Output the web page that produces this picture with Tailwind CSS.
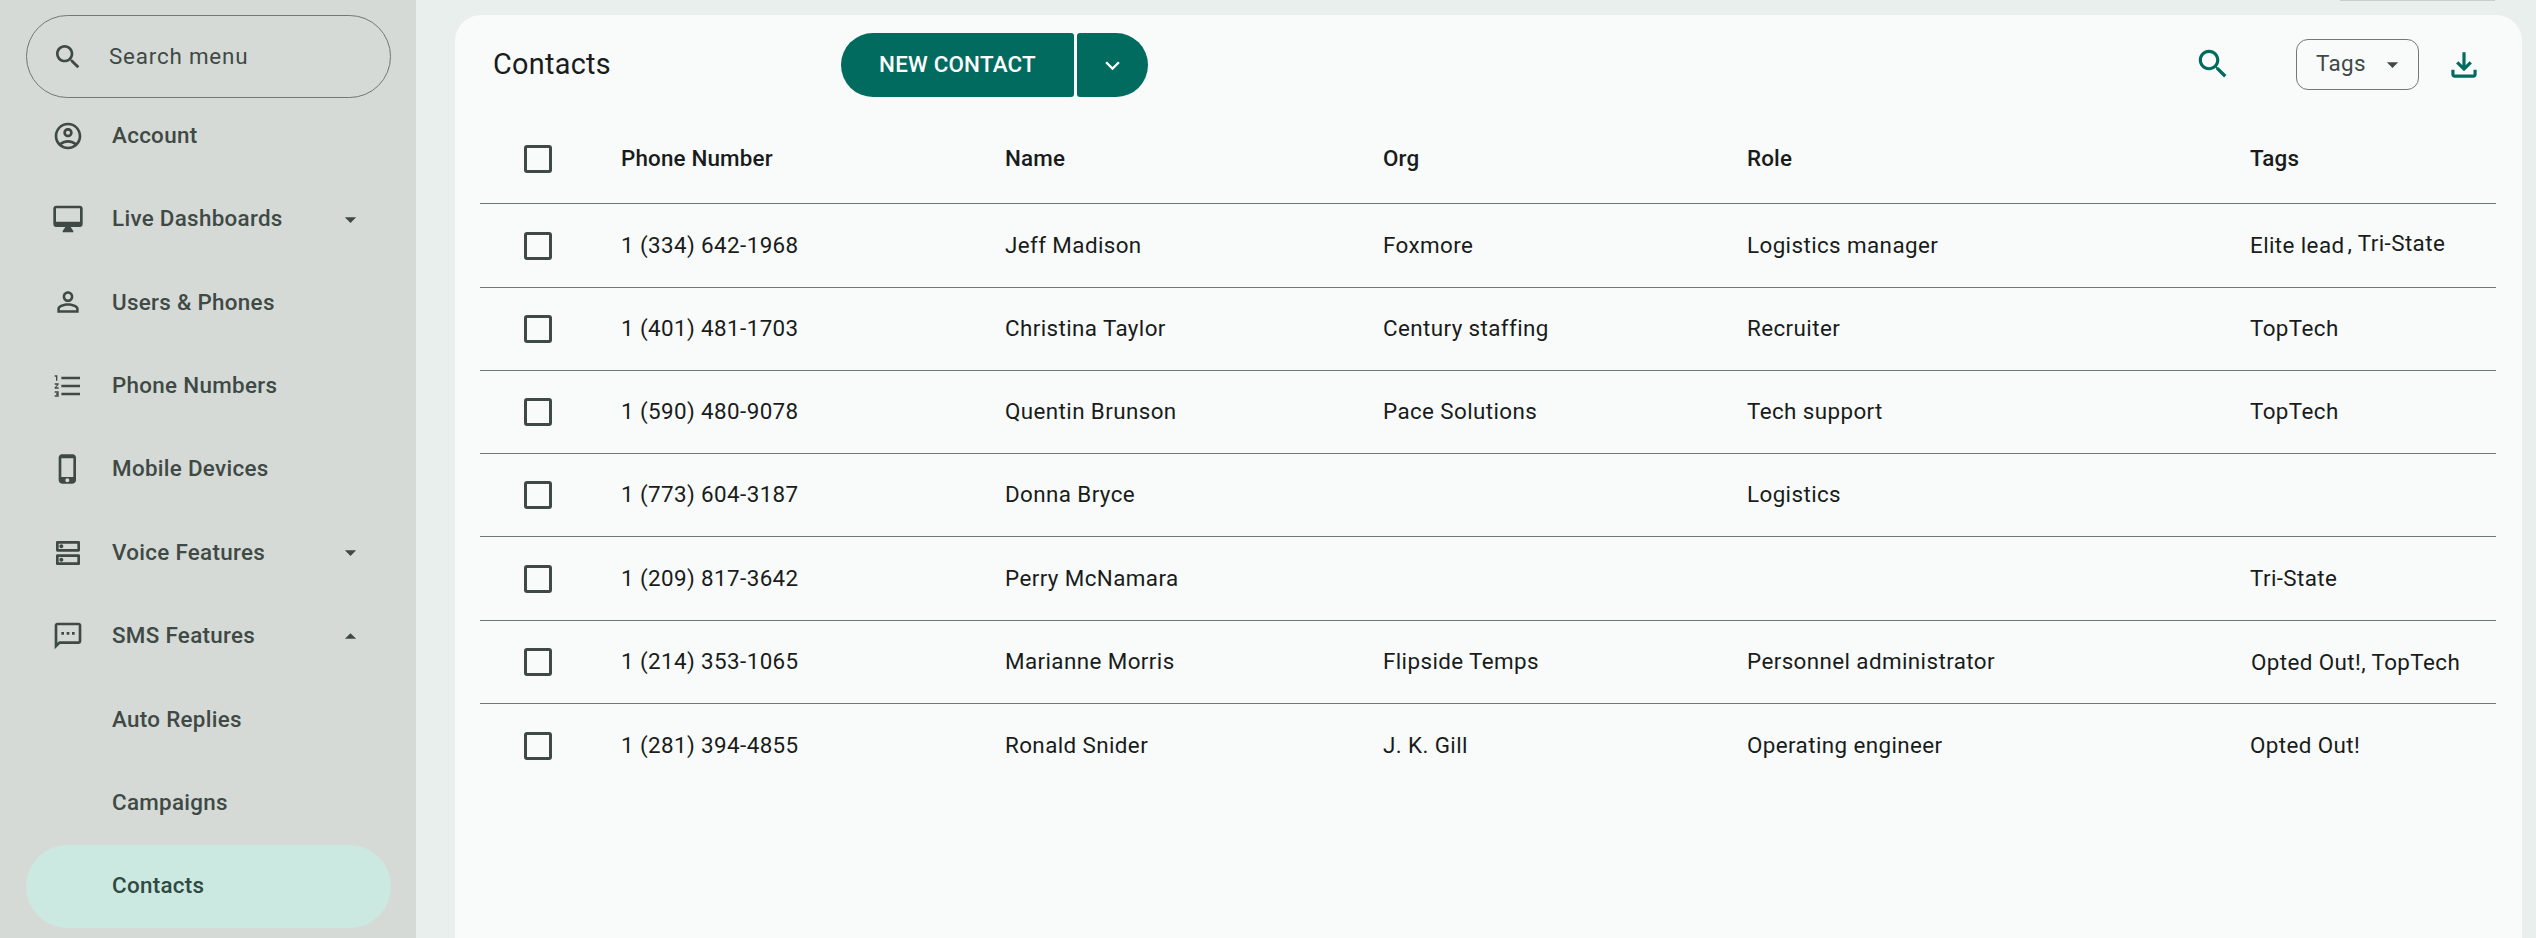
<!DOCTYPE html>
<html lang="en">
<head>
  <meta charset="UTF-8">
  <meta name="viewport" content="width=device-width, initial-scale=1.0">
  <title>Contacts</title>
  <script src="https://cdn.jsdelivr.net/npm/@tailwindcss/browser@4"></script>
</head>
<body class="h-screen overflow-hidden bg-[#e9efec] font-['Roboto',sans-serif] text-[22.4px] text-[#191c1b] flex">
  <!-- sidebar -->
  <aside class="w-[416px] h-[938px] shrink-0 bg-[#d5dad6] text-[#3f4945] pl-[26px] pr-[25px] pt-[15px]">
    <div class="h-[83px] border border-[#6f7975] rounded-[42px] flex items-center pl-[25px]">
      <svg class="w-8 h-8 fill-current" viewBox="0 0 24 24"><path d="M15.5 14h-.79l-.28-.27C15.41 12.59 16 11.11 16 9.5 16 5.91 13.09 3 9.5 3S3 5.91 3 9.5 5.91 16 9.5 16c1.61 0 3.09-.59 4.23-1.57l.27.28v.79l5 4.99L20.49 19l-4.99-5zm-6 0C7.01 14 5 11.99 5 9.5S7.01 5 9.5 5 14 7.01 14 9.5 11.99 14 9.5 14z"/></svg>
      <span class="ml-[25px] tracking-[0.8px]">Search menu</span>
    </div>
    <nav class="font-medium tracking-[0.3px]">
      <a class="h-[83.4px] -mt-[4px] flex items-center pl-[26px]">
        <svg class="w-8 h-8 fill-current mr-[28px]" viewBox="0 0 24 24"><path fill-rule="evenodd" d="M12 2C6.48 2 2 6.48 2 12s4.48 10 10 10 10-4.48 10-10S17.52 2 12 2zM7.35 18.5C8.66 17.56 10.26 17 12 17s3.34.56 4.65 1.5C15.34 19.44 13.74 20 12 20s-3.34-.56-4.65-1.5zm10.79-1.38C16.45 15.8 14.32 15 12 15s-4.45.8-6.14 2.12C4.7 15.73 4 13.95 4 12c0-4.42 3.58-8 8-8s8 3.58 8 8c0 1.95-.7 3.73-1.86 5.12zM12 6c-1.93 0-3.5 1.57-3.5 3.5S10.07 13 12 13s3.5-1.57 3.5-3.5S13.93 6 12 6zm0 5c-.83 0-1.5-.67-1.5-1.5S11.17 8 12 8s1.5.67 1.5 1.5S12.83 11 12 11z"/></svg>
        Account
      </a>
      <a class="h-[83.4px] flex items-center pl-[26px]">
        <svg class="w-8 h-8 fill-current mr-[28px]" viewBox="0 0 24 24"><path d="M21 2H3c-1.1 0-2 .9-2 2v12c0 1.1.9 2 2 2h7l-2 3v1h8v-1l-2-3h7c1.1 0 2-.9 2-2V4c0-1.1-.9-2-2-2zm0 12H3V4h18v10z"/></svg>
        Live Dashboards
        <svg class="w-[27px] h-[27px] fill-current ml-auto mr-[27px]" viewBox="0 0 24 24"><path d="M7 10l5 5 5-5z"/></svg>
      </a>
      <a class="h-[83.4px] flex items-center pl-[26px]">
        <svg class="w-8 h-8 fill-current mr-[28px]" viewBox="0 0 24 24"><path d="M12 5.9c1.16 0 2.1.94 2.1 2.1s-.94 2.1-2.1 2.1S9.9 9.16 9.9 8s.94-2.1 2.1-2.1m0 9c2.97 0 6.1 1.46 6.1 2.1v1.1H5.9V17c0-.64 3.13-2.1 6.1-2.1M12 4C9.79 4 8 5.79 8 8s1.79 4 4 4 4-1.79 4-4-1.79-4-4-4zm0 9c-2.67 0-8 1.34-8 4v3h16v-3c0-2.66-5.33-4-8-4z"/></svg>
        Users &amp; Phones
      </a>
      <a class="h-[83.4px] flex items-center pl-[26px]">
        <svg class="w-8 h-8 fill-current mr-[28px]" viewBox="0 0 24 24"><path d="M2 17h2v.5H3v1h1v.5H2v1h3v-4H2v1zm1-9h1V4H2v1h1v3zm-1 3h1.8L2 13.1v.9h3v-1H3.2L5 10.9V10H2v1zm5-6v2h14V5H7zm0 14h14v-2H7v2zm0-6h14v-2H7v2z"/></svg>
        Phone Numbers
      </a>
      <a class="h-[83.4px] flex items-center pl-[26px]">
        <svg class="w-8 h-8 fill-current mr-[28px]" viewBox="0 0 24 24"><path d="M15.5 1h-8C6.12 1 5 2.12 5 3.5v17C5 21.88 6.12 23 7.5 23h8c1.38 0 2.5-1.12 2.5-2.5v-17C18 2.12 16.88 1 15.5 1zm-4 21c-.83 0-1.5-.67-1.5-1.5s.67-1.5 1.5-1.5 1.5.67 1.5 1.5-.67 1.5-1.5 1.5zm4.5-4H7V4h9v14z"/></svg>
        Mobile Devices
      </a>
      <a class="h-[83.4px] flex items-center pl-[26px]">
        <svg class="w-8 h-8 fill-current mr-[28px]" viewBox="0 0 24 24"><path d="M19 15v4H5v-4h14m1-2H4c-.55 0-1 .45-1 1v6c0 .55.45 1 1 1h16c.55 0 1-.45 1-1v-6c0-.55-.45-1-1-1zM7 18.5c-.82 0-1.5-.67-1.5-1.5s.68-1.5 1.5-1.5 1.5.67 1.5 1.5-.67 1.5-1.5 1.5zM19 5v4H5V5h14m1-2H4c-.55 0-1 .45-1 1v6c0 .55.45 1 1 1h16c.55 0 1-.45 1-1V4c0-.55-.45-1-1-1zM7 8.5c-.82 0-1.5-.67-1.5-1.5S6.18 5.5 7 5.5s1.5.68 1.5 1.5S7.83 8.5 7 8.5z"/></svg>
        Voice Features
        <svg class="w-[27px] h-[27px] fill-current ml-auto mr-[27px]" viewBox="0 0 24 24"><path d="M7 10l5 5 5-5z"/></svg>
      </a>
      <a class="h-[83.4px] flex items-center pl-[26px]">
        <svg class="w-8 h-8 fill-current mr-[28px]" viewBox="0 0 24 24"><path d="M20 2H4c-1.1 0-1.99.9-1.99 2L2 22l4-4h14c1.1 0 2-.9 2-2V4c0-1.1-.9-2-2-2zm0 14H5.17L4 17.17V4h16v12zM7 9h2v2H7zm4 0h2v2h-2zm4 0h2v2h-2z"/></svg>
        SMS Features
        <svg class="w-[27px] h-[27px] fill-current ml-auto mr-[27px]" viewBox="0 0 24 24"><path d="M7 14l5-5 5 5z"/></svg>
      </a>
      <a class="h-[83.4px] flex items-center pl-[86px]">Auto Replies</a>
      <a class="h-[83.4px] flex items-center pl-[86px]">Campaigns</a>
      <a class="h-[83px] flex items-center pl-[86px] bg-[#cce9e1] text-[#2f4a43] rounded-[42px]">Contacts</a>
    </nav>
  </aside>

  <!-- main -->
  <main class="relative flex-1 pl-[39px] pr-[14px] pt-[15px]">
    <div class="absolute top-0 right-[41px] w-[155px] h-px bg-[#c9cfcb]"></div>
    <section class="h-[1000px] bg-[#f8fbfa] rounded-t-[26px] pl-[25px] pr-[26px]">
      <header class="h-[100px] flex items-center">
        <h1 class="ml-[13px] w-[348px] text-[28.8px] tracking-[0.3px] leading-none -mt-px">Contacts</h1>
        <button class="h-16 w-[233px] bg-[#006b5e] text-white font-medium text-[22.4px] tracking-[0.2px] rounded-l-[32px] rounded-r-[3px]">NEW CONTACT</button>
        <button class="h-16 w-[71px] ml-[3px] bg-[#006b5e] text-white rounded-r-[32px] rounded-l-[3px] flex items-center justify-center">
          <svg class="w-[29px] h-[29px] fill-current" viewBox="0 0 24 24"><path d="M7.41 8.59L12 13.17l4.59-4.58L18 10l-6 6-6-6z"/></svg>
        </button>
        <svg class="w-[38px] h-[38px] fill-[#006b5e] ml-auto mb-[2px]" viewBox="0 0 24 24"><path d="M15.5 14h-.79l-.28-.27C15.41 12.59 16 11.11 16 9.5 16 5.91 13.09 3 9.5 3S3 5.91 3 9.5 5.91 16 9.5 16c1.61 0 3.09-.59 4.23-1.57l.27.28v.79l5 4.99L20.49 19l-4.99-5zm-6 0C7.01 14 5 11.99 5 9.5S7.01 5 9.5 5 14 7.01 14 9.5 11.99 14 9.5 14z"/></svg>
        <div class="ml-[64px] w-[123px] h-[51px] mb-[2px] border border-[#6f7975] rounded-[12px] flex items-center pl-[19px] text-[#3f4945] tracking-[0.4px]">
          Tags
          <svg class="w-[27px] h-[27px] fill-current ml-[13px]" viewBox="0 0 24 24"><path d="M7 10l5 5 5-5z"/></svg>
        </div>
        <svg class="w-[38px] h-[38px] fill-[#006b5e] ml-[26px] mr-[13px]" viewBox="0 0 24 24"><path d="M18 15v3H6v-3H4v3c0 1.1.9 2 2 2h12c1.1 0 2-.9 2-2v-3h-2zm-1-4l-1.41-1.41L13 12.17V4h-2v8.17L8.41 9.59 7 11l5 5 5-5z"/></svg>
      </header>

      <div class="tracking-[0.4px]">
        <div class="grid grid-cols-[141px_384px_378px_364px_503px_1fr] items-center h-[89.4px] border-b border-[#6f7975] font-medium tracking-[0.16px]">
          <span class="ml-[44px] w-7 h-7 border-[3px] border-[#3f4945] rounded-[3px]"></span>
          <span>Phone Number</span><span>Name</span><span>Org</span><span>Role</span><span>Tags</span>
        </div>
        <div class="grid grid-cols-[141px_384px_378px_364px_503px_1fr] items-center h-[83.25px] border-b border-[#6f7975]">
          <span class="ml-[44px] w-7 h-7 border-[3px] border-[#3f4945] rounded-[3px]"></span>
          <span>1 (334) 642-1968</span><span>Jeff Madison</span><span>Foxmore</span><span>Logistics manager</span>
          <span class="whitespace-nowrap">Elite lead<span class="relative -top-[2px] ml-[3px]">, Tri-State</span></span>
        </div>
        <div class="grid grid-cols-[141px_384px_378px_364px_503px_1fr] items-center h-[83.25px] border-b border-[#6f7975]">
          <span class="ml-[44px] w-7 h-7 border-[3px] border-[#3f4945] rounded-[3px]"></span>
          <span>1 (401) 481-1703</span><span>Christina Taylor</span><span>Century staffing</span><span>Recruiter</span><span>TopTech</span>
        </div>
        <div class="grid grid-cols-[141px_384px_378px_364px_503px_1fr] items-center h-[83.25px] border-b border-[#6f7975]">
          <span class="ml-[44px] w-7 h-7 border-[3px] border-[#3f4945] rounded-[3px]"></span>
          <span>1 (590) 480-9078</span><span>Quentin Brunson</span><span>Pace Solutions</span><span>Tech support</span><span>TopTech</span>
        </div>
        <div class="grid grid-cols-[141px_384px_378px_364px_503px_1fr] items-center h-[83.25px] border-b border-[#6f7975]">
          <span class="ml-[44px] w-7 h-7 border-[3px] border-[#3f4945] rounded-[3px]"></span>
          <span>1 (773) 604-3187</span><span>Donna Bryce</span><span></span><span>Logistics</span><span></span>
        </div>
        <div class="grid grid-cols-[141px_384px_378px_364px_503px_1fr] items-center h-[83.25px] border-b border-[#6f7975]">
          <span class="ml-[44px] w-7 h-7 border-[3px] border-[#3f4945] rounded-[3px]"></span>
          <span>1 (209) 817-3642</span><span>Perry McNamara</span><span></span><span></span><span>Tri-State</span>
        </div>
        <div class="grid grid-cols-[141px_384px_378px_364px_503px_1fr] items-center h-[83.25px] border-b border-[#6f7975]">
          <span class="ml-[44px] w-7 h-7 border-[3px] border-[#3f4945] rounded-[3px]"></span>
          <span>1 (214) 353-1065</span><span>Marianne Morris</span><span>Flipside Temps</span><span>Personnel administrator</span><span class="whitespace-nowrap ml-px relative top-px">Opted Out!, TopTech</span>
        </div>
        <div class="grid grid-cols-[141px_384px_378px_364px_503px_1fr] items-center h-[83.25px]">
          <span class="ml-[44px] w-7 h-7 border-[3px] border-[#3f4945] rounded-[3px]"></span>
          <span>1 (281) 394-4855</span><span>Ronald Snider</span><span>J. K. Gill</span><span>Operating engineer</span><span>Opted Out!</span>
        </div>
      </div>
    </section>
  </main>
</body>
</html>
